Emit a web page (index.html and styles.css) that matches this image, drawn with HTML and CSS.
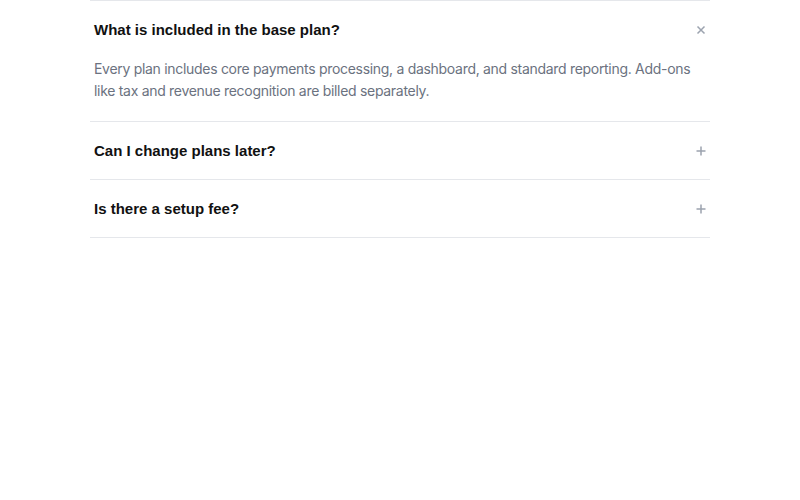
FILE: index.html
```html
<!DOCTYPE html>
<html lang="en">

<head>
    <meta charset="UTF-8">
    <meta name="viewport" content="width=device-width, initial-scale=1.0">
    <title>FAQ</title>
    <link rel="stylesheet" href="styles.css">
</head>

<body>
    <div class="faq">
        <div class="faq-item open">
            <button class="faq-question">
                <span>What is included in the base plan?</span>
                <svg class="faq-icon" width="10" height="10" viewBox="0 0 10 10">
                    <path d="M1.5 1.5l7 7M8.5 1.5l-7 7" />
                </svg>
            </button>
            <div class="faq-answer">
                <p>Every plan includes core payments processing, a dashboard, and standard reporting. Add-ons like tax and revenue recognition are billed separately.</p>
            </div>
        </div>
        <div class="faq-item">
            <button class="faq-question">
                <span>Can I change plans later?</span>
                <svg class="faq-icon" width="10" height="10" viewBox="0 0 10 10">
                    <path d="M5 0.5v9M0.5 5h9" />
                </svg>
            </button>
        </div>
        <div class="faq-item">
            <button class="faq-question">
                <span>Is there a setup fee?</span>
                <svg class="faq-icon" width="10" height="10" viewBox="0 0 10 10">
                    <path d="M5 0.5v9M0.5 5h9" />
                </svg>
            </button>
        </div>
    </div>
</body>

</html>
```

FILE: styles.css
```css
body {
    margin: 0;
    padding: 0;
    background: #fff;
    font-family: "Inter", "Noto Sans", sans-serif;
}

.faq {
    width: 620px;
    margin: 0 auto;
    border-top: 1px solid #e5e7eb;
}

.faq-item {
    border-bottom: 1px solid #e5e7eb;
}

.faq-question {
    display: flex;
    align-items: center;
    justify-content: space-between;
    width: 100%;
    padding: 19px 4px;
    background: none;
    border: none;
    font-family: "Liberation Sans", Arial, sans-serif;
    font-size: 15px;
    font-weight: bold;
    line-height: 19px;
    color: #111;
    text-align: left;
    cursor: pointer;
}

.faq-icon {
    fill: none;
    stroke: #9ca3af;
    stroke-width: 1.5;
}

.faq-answer {
    padding: 0 4px 19px;
}

.faq-answer p {
    margin: 0;
    font-size: 14px;
    letter-spacing: -0.3px;
    line-height: 22px;
    color: #6b7280;
}
```
